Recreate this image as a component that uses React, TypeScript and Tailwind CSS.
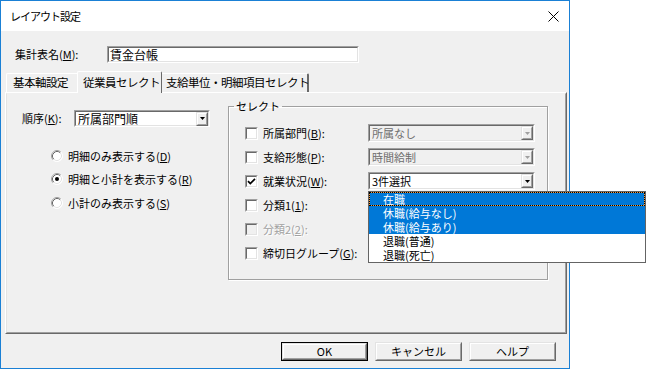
import type { ReactNode } from 'react'

function Raised({ className = '', children }: { className?: string; children?: ReactNode }) {
  return (
    <div className={`border border-t-[#e3e3e3] border-l-[#e3e3e3] border-b-[#696969] border-r-[#696969] ${className}`}>
      <div className="flex h-full w-full items-center justify-center border border-t-white border-l-white border-b-[#a0a0a0] border-r-[#a0a0a0] bg-[#f0f0f0]">
        {children}
      </div>
    </div>
  )
}

function DownArrow({ disabled }: { disabled?: boolean }) {
  return (
    <svg width="5" height="3" viewBox="0 0 5 3">
      <path d="M0 0h5L2.5 3z" fill={disabled ? '#a0a0a0' : '#000'} />
    </svg>
  )
}

function Combo({
  text,
  disabled,
  className = '',
  children,
}: {
  text: string
  disabled?: boolean
  className?: string
  children?: ReactNode
}) {
  return (
    <div className={`relative h-[18px] ${className}`}>
      <div className="h-full border border-t-[#a0a0a0] border-l-[#a0a0a0] border-b-white border-r-white">
        <div
          className={`flex h-full items-center border border-t-[#696969] border-l-[#696969] border-b-[#e3e3e3] border-r-[#e3e3e3] ${
            disabled ? 'bg-[#f0f0f0] text-[#6d6d6d]' : 'bg-white text-black'
          }`}
        >
          <span className="flex-1 whitespace-nowrap pl-[2px] leading-[14px]">{text}</span>
          <Raised className="h-[14px] w-[12px]">
            <DownArrow disabled={disabled} />
          </Raised>
        </div>
      </div>
      {children}
    </div>
  )
}

function CheckBox({ checked, disabled }: { checked?: boolean; disabled?: boolean }) {
  return (
    <div className="h-[13px] w-[13px] shrink-0 border border-t-[#a0a0a0] border-l-[#a0a0a0] border-b-white border-r-white">
      <div
        className={`flex h-full w-full items-center justify-center border border-t-[#696969] border-l-[#696969] border-b-[#e3e3e3] border-r-[#e3e3e3] ${
          disabled ? 'bg-[#f0f0f0]' : 'bg-white'
        }`}
      >
        {checked && (
          <svg width="9" height="9" viewBox="0 0 9 9">
            <path d="M1 4.2 L3.3 6.6 L8 1.8" stroke="#000" strokeWidth="1.7" fill="none" />
          </svg>
        )}
      </div>
    </div>
  )
}

function Radio({ checked }: { checked?: boolean }) {
  return (
    <svg width="12" height="12" viewBox="0 0 12 12" className="shrink-0">
      <circle cx="6" cy="6" r="5.5" fill="#fff" />
      <path d="M2.11 9.89 A5.5 5.5 0 0 1 9.89 2.11" stroke="#a0a0a0" fill="none" />
      <path d="M2.82 9.18 A4.5 4.5 0 0 1 9.18 2.82" stroke="#696969" fill="none" />
      <path d="M9.89 2.11 A5.5 5.5 0 0 1 2.11 9.89" stroke="#ffffff" fill="none" />
      <path d="M9.18 2.82 A4.5 4.5 0 0 1 2.82 9.18" stroke="#e3e3e3" fill="none" />
      {checked && <circle cx="6" cy="6" r="2" fill="#000" />}
    </svg>
  )
}

function Key({ k }: { k: string }) {
  return <span className="underline underline-offset-[1px]">{k}</span>
}

const rows: { label: ReactNode; checked?: boolean; disabled?: boolean; combo?: string; comboDisabled?: boolean; open?: boolean }[] = [
  { label: <>所属部門(<Key k="B" />):</>, combo: '所属なし', comboDisabled: true },
  { label: <>支給形態(<Key k="P" />):</>, combo: '時間給制', comboDisabled: true },
  { label: <>就業状況(<Key k="W" />):</>, checked: true, combo: '3件選択', open: true },
  { label: <>分類1(<Key k="1" />):</> },
  { label: <>分類2(<Key k="2" />):</>, disabled: true },
  { label: <>締切日グループ(<Key k="G" />):</> },
]

const listItems = [
  { text: '在職', selected: true, focus: true },
  { text: '休職(給与なし)', selected: true },
  { text: '休職(給与あり)', selected: true },
  { text: '退職(普通)' },
  { text: '退職(死亡)' },
]

export default function App() {
  return (
    <div className="flex h-[369px] w-[646px] bg-white font-['Noto_Sans_CJK_JP','Noto_Sans',sans-serif] text-[11px] text-black">
      <div className="flex h-[369px] w-[570px] flex-col border border-[#1a80d5] bg-[#f0f0f0]">
        {/* title bar */}
        <div className="flex h-[30px] shrink-0 items-center justify-between bg-white pl-[9px] pr-[10px]">
          <span className="text-[11px] tracking-[-1px]">レイアウト設定</span>
          <svg width="11" height="11" viewBox="0 0 11 11">
            <path d="M0.5 0.5 L10.5 10.5 M10.5 0.5 L0.5 10.5" stroke="#000" strokeWidth="1" />
          </svg>
        </div>

        {/* name row */}
        <div className="mt-[15px] flex h-[17px] items-center">
          <span className="w-[106px] pl-[14px]">
            集計表名(<Key k="M" />):
          </span>
          <div className="h-[17px] w-[252px] border border-t-[#a0a0a0] border-l-[#a0a0a0] border-b-white border-r-white">
            <div className="flex h-full items-center border border-t-[#696969] border-l-[#696969] border-b-[#e3e3e3] border-r-[#e3e3e3] bg-white pl-[1px] text-[12px]">
              賃金台帳
            </div>
          </div>
        </div>

        {/* tabs */}
        <div className="ml-[5px] mt-[8px] flex h-[21px] items-end whitespace-nowrap text-[11.5px] tracking-[-0.5px]">
          <div className="flex h-[19px] w-[71px] items-center rounded-tl-[2px] border-l border-t border-l-white border-t-white pl-[6px]">
            基本軸設定
          </div>
          <div className="relative z-10 -mb-px flex h-[22px] w-[85px] items-start rounded-t-[2px] border-l border-t border-r border-l-white border-t-white border-r-[#696969] bg-[#f0f0f0] pl-[5px] pt-[2px]">
            従業員セレクト
          </div>
          <div className="flex h-[19px] w-[147px] items-center rounded-tr-[2px] border-t border-r-2 border-t-white border-r-[#696969] pl-[4px]">
            支給単位・明細項目セレクト
          </div>
        </div>

        {/* tab panel */}
        <div className="ml-[4px] h-[242px] w-[562px] border border-t-white border-l-white border-b-[#696969] border-r-[#696969]">
          <div className="flex h-full border border-t-[#f0f0f0] border-l-[#e3e3e3] border-b-[#a0a0a0] border-r-[#a0a0a0]">
            {/* left column */}
            <div className="w-[221px] shrink-0 pl-[15px] pt-[16px]">
              <div className="flex h-[17px] items-center">
                <span className="w-[52px]">
                  順序(<Key k="K" />):
                </span>
                <Combo text="所属部門順" className="w-[136px] !h-[17px] text-[12px]" />
              </div>
              <div className="mt-[17px] flex flex-col pl-[29px]">
                {[
                  { t: '明細のみ表示する', k: 'D' },
                  { t: '明細と小計を表示する', k: 'R', c: true },
                  { t: '小計のみ表示する', k: 'S' },
                ].map((r) => (
                  <div key={r.k} className="flex h-[23.5px] items-center gap-[5px]">
                    <Radio checked={r.c} />
                    <span>
                      {r.t}(<Key k={r.k} />)
                    </span>
                  </div>
                ))}
              </div>
            </div>

            {/* select group */}
            <fieldset className="mt-[6px] h-[180px] w-[320px] border border-[#a0a0a0] shadow-[inset_1px_1px_0_#fff,1px_1px_0_#fff]">
              <legend className="ml-[5px] px-[2px] leading-[12px]">セレクト</legend>
              <div className="flex flex-col pl-[16px] pt-[9px]">
                {rows.map((r, i) => (
                  <div key={i} className="flex h-[24px] items-center">
                    <CheckBox checked={r.checked} disabled={r.disabled} />
                    <span
                      className={`ml-[5px] w-[105px] whitespace-nowrap ${
                        r.disabled ? 'text-[#a0a0a0] [text-shadow:1px_1px_0_#fff]' : ''
                      }`}
                    >
                      {r.label}
                    </span>
                    {r.combo && (
                      <Combo text={r.combo} disabled={r.comboDisabled} className="w-[167px]">
                        {r.open && (
                          <div className="absolute left-0 top-[19px] z-20 w-[278px] border border-[#646464] bg-white">
                            {listItems.map((it) =>
                              it.focus ? (
                                <div key={it.text} className="bg-[#f39a3c]">
                                  <div className="h-[14px] overflow-hidden border border-dotted border-black bg-[#0078d7] bg-clip-padding pl-[13px] leading-[12px] text-white">
                                    {it.text}
                                  </div>
                                </div>
                              ) : (
                                <div
                                  key={it.text}
                                  className={`h-[14px] overflow-hidden pl-[14px] leading-[14px] ${
                                    it.selected ? 'bg-[#0078d7] text-white' : 'text-black'
                                  }`}
                                >
                                  {it.text}
                                </div>
                              )
                            )}
                          </div>
                        )}
                      </Combo>
                    )}
                  </div>
                ))}
              </div>
            </fieldset>
          </div>
        </div>

        {/* buttons */}
        <div className="mt-[8px] flex justify-end gap-[7px] pr-[13px]">
          <div className="h-[19px] w-[87px] border border-black">
            <Raised className="h-full w-full">OK</Raised>
          </div>
          <Raised className="h-[19px] w-[87px]">キャンセル</Raised>
          <Raised className="h-[19px] w-[87px]">ヘルプ</Raised>
        </div>
      </div>
    </div>
  )
}
